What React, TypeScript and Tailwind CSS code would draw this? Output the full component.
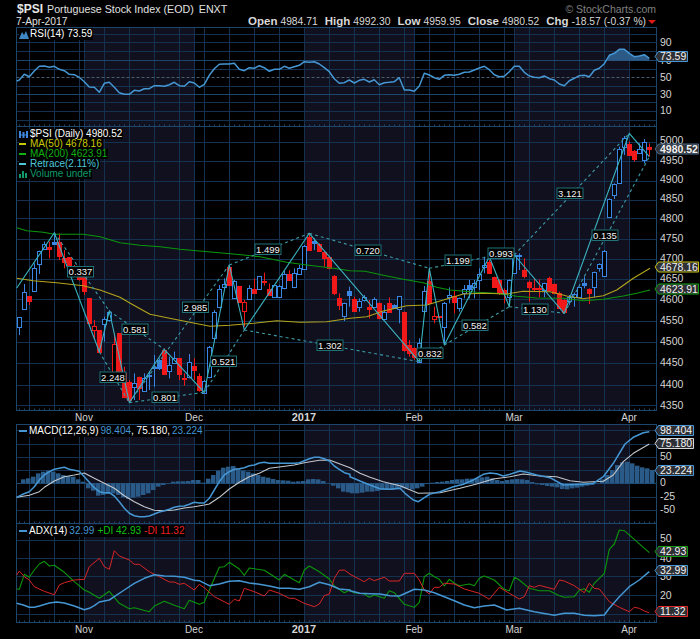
import type { ReactNode } from 'react';

// chart points were read off 3x crops, so they go through this to get page coords
const zp = (pts: number[], ox: number, oy: number) => {
  const out: string[] = [];
  for (let i = 0; i < pts.length; i += 2) {
    out.push(`${(pts[i] / 3 + ox).toFixed(1)},${(pts[i + 1] / 3 + oy).toFixed(1)}`);
  }
  return out.join(' ');
};

const LEFT = 16.5;
const RIGHT = 656.5;
const weekLines = Array.from({ length: 25 }, (_, i) => 29 + i * 25);
const monthLines = [84.5, 194.5, 304.5, 414.5, 514.5, 629.5];
const bands = [
  [84.5, 194.5],
  [304.5, 414.5],
  [514.5, 629.5],
];
const GRID = '#14324f';
const EDGE = '#1c466c';
const BLUE = '#4596d2';

function Grid({ top, bottom, hlines, strong = [] }: { top: number; bottom: number; hlines: number[]; strong?: number[] }) {
  const ticks = Array.from({ length: 128 }, (_, i) => 19.5 + i * 5);
  return (
    <g>
      {bands.map(([a, b]) => (
        <rect key={a} x={a} y={top} width={b - a} height={bottom - top} fill="#10101f" />
      ))}
      {weekLines.map((x) => (
        <line key={x} x1={x + 0.5} x2={x + 0.5} y1={top} y2={bottom} stroke={GRID} />
      ))}
      {monthLines.slice(0, 5).map((x) => (
        <line key={x} x1={x} x2={x} y1={top} y2={bottom} stroke={GRID} />
      ))}
      {hlines.map((y) => (
        <line key={y} x1={LEFT} x2={RIGHT} y1={y} y2={y} stroke={GRID} />
      ))}
      {strong.map((y) => (
        <line key={y} x1={LEFT} x2={RIGHT} y1={y} y2={y} stroke={EDGE} />
      ))}
      {ticks.map((x) => (
        <line key={x} x1={x} x2={x} y1={bottom - 2} y2={bottom} stroke={EDGE} />
      ))}
      <rect x={LEFT} y={top} width={RIGHT - LEFT} height={bottom - top} fill="none" stroke={EDGE} />
    </g>
  );
}

function Tag({ y, label, border, bold, w = 41 }: { y: number; label: string; border: string; bold?: boolean; w?: number }) {
  const x = 658;
  return (
    <g>
      <path
        d={`M${x - 3} ${y} L${x + 0.5} ${y - 5} H${x + w - 0.5} V${y + 5} H${x + 0.5} Z`}
        fill="#2e3036"
        stroke={border}
      />
      <text x={x + 2} y={y + 3.8} fontSize={10.5} fontWeight={bold ? 700 : 400} fill="#f2f2f2">
        {label}
      </text>
    </g>
  );
}

function AxisLabels({ items }: { items: [string, number][] }) {
  return (
    <g>
      {items.map(([t, y]) => (
        <text key={t} x={660} y={y + 3.5} fontSize={10.5} fill="#d4d4d4">
          {t}
        </text>
      ))}
    </g>
  );
}

function MonthLabels({ y }: { y: number }) {
  const items: [string, number, boolean][] = [
    ['Nov', 84, false],
    ['Dec', 194, false],
    ['2017', 304, true],
    ['Feb', 414, false],
    ['Mar', 514, false],
    ['Apr', 629, false],
  ];
  return (
    <g>
      {items.map(([t, x, b]) => (
        <text key={t} x={x} y={y} textAnchor="middle" fontSize={b ? 11 : 10} fontWeight={b ? 700 : 400} fill="#d4d4d4">
          {t}
        </text>
      ))}
    </g>
  );
}

function Panel({ top, height, className, legend, children }: { top: number; height: number; className: string; legend: ReactNode; children: ReactNode }) {
  return (
    <div className={`relative w-[700px] ${className}`}>
      <svg width={700} height={height} viewBox={`0 ${top} 700 ${height}`} className="block">
        {children}
      </svg>
      {legend}
    </div>
  );
}

function Poly({ points, color, width = 1.3 }: { points: string; color: string; width?: number }) {
  return <polyline points={points} fill="none" stroke={color} strokeWidth={width} strokeLinejoin="round" />;
}

/* ---------- RSI ---------- */
const rsiA = [50,243,58,240,73,223,88,230,103,213,118,199,133,198,148,202,163,199,178,208,193,212,208,223,223,224,238,232,253,245,268,261,283,262,298,277,313,250,328,247,343,262,358,278,373,283,388,283,403,271,418,273,433,266,448,266,463,257,478,257,493,259,508,254,523,247,538,257,553,259,568,245,583,249,598,262,613,253,628,226,643,206,658,193,673,192,688,192,703,190,718,208,733,212,748,203,763,205,778,197,793,203,808,214,823,208,838,208,853,199,868,205,883,200,898,196,913,185,928,187,943,185,958,192,973,203,988,215,1003,236,1018,250,1033,248,1048,240];
const rsiB = [13,249,28,241,43,238,58,246,73,239,88,254,103,248,118,247,133,245,148,233,163,270,178,270,193,274,208,258,223,220,238,225,253,233,268,238,283,226,298,224,313,226,328,223,343,217,358,216,373,210,388,204,403,199,418,209,433,224,448,230,463,229,478,215,493,199,508,199,523,217,538,228,553,232,568,233,583,228,598,236,613,240,628,252,643,257,658,242,673,235,688,227,703,226,718,230,733,211,748,205,763,191,778,166,793,160,808,148,823,148,838,160,853,170,868,168,883,164,898,175];
const rsiHot = [772,182,778,166,793,160,808,148,823,148,838,160,853,170,868,168,883,164,898,175,898,182];

function RsiChart() {
  return (
    <Panel
      top={27}
      height={100}
      className="h-[100px]"
      legend={
        <div className="absolute left-[19px] top-[1px] flex items-center gap-[1px] bg-black pr-[1px] text-[10px] leading-[12px] text-white">
          <svg width={10} height={9} viewBox="0 0 10 9">
            <path d="M0 9 L3 2 L5 5 L7 1 L10 9 Z" fill="#3f86c4" />
          </svg>
          <span>RSI(14) 73.59</span>
        </div>
      }
    >
      <Grid
        top={27.5}
        bottom={126.5}
        hlines={[34.5, 42.5, 51.5, 69.5, 86.5, 102.5, 111.5, 120.5]}
        strong={[60.5, 94.5]}
      />
      <line x1={LEFT} x2={RIGHT} y1={77.5} y2={77.5} stroke="#4a5c70" strokeDasharray="3 2" />
      <polygon points={zp(rsiHot, 350, 0)} fill="#2c5a86" />
      <Poly points={`${zp(rsiA, 0, 0)} ${zp(rsiB, 350, 0)}`} color={BLUE} width={1.5} />
      <AxisLabels items={[['90', 42], ['70', 60], ['50', 77], ['30', 94], ['10', 110]]} />
      <Tag y={56.5} label="73.59" border={BLUE} w={30} />
    </Panel>
  );
}

/* ---------- price ---------- */
// [bodyTop, bodyBottom, wickTop, wickBottom, kind], all in crop pixels
// kind: h hollow blue, r red, b solid blue, o hollow red
type Candle = [number, number, number, number, string];
const candlesA: Candle[] = [
  [322,352,322,375,'h'],[245,296,222,298,'h'],[258,272,258,285,'r'],[175,242,160,245,'h'],[122,163,122,192,'h'],[103,118,95,120,'h'],[112,116,95,145,'r'],[97,101,70,101,'b'],[97,137,70,150,'r'],[145,155,120,175,'r'],[142,168,142,195,'r'],[175,195,165,200,'r'],[197,208,190,212,'r'],[200,243,190,255,'r'],[265,340,265,345,'r'],[347,360,330,390,'o'],[360,425,360,428,'r'],[328,343,320,395,'h'],[305,330,300,335,'h'],[403,487,370,490,'o'],[370,490,370,495,'r'],[490,560,470,565,'r'],[515,570,510,575,'r'],[520,532,490,570,'h'],[500,535,500,570,'r'],[505,542,490,545,'h'],[496,499,485,540,'b'],[470,475,435,530,'h'],[450,475,445,480,'b'],[420,492,415,495,'r'],[466,482,440,505,'h'],[445,460,425,462,'h'],[445,492,445,510,'r'],[503,507,490,527,'r'],[455,500,432,505,'h'],[468,480,445,510,'r'],[498,540,490,545,'r'],[512,548,510,550,'h'],[412,500,408,505,'h'],[305,385,300,390,'h'],[238,292,225,295,'h'],[222,232,205,235,'h'],[170,225,165,228,'r'],[212,263,210,265,'h'],[228,275,228,278,'r'],[275,302,270,350,'o'],[235,268,225,270,'h'],[238,248,205,250,'r'],[199,238,199,240,'h'],[213,216,188,227,'r'],[238,255,220,258,'r'],[225,260,225,262,'h'],[227,260,225,262,'h'],[193,235,183,238,'h'],[192,210,180,212,'r'],[188,232,175,235,'h'],[175,193,165,195,'h'],[107,178,105,180,'h'],[80,120,70,122,'r'],[93,100,85,120,'b'],[103,122,100,125,'r'],[125,145,125,170,'r'],[140,175,138,178,'r'],[198,250,195,255,'r'],[265,285,250,300,'r'],[280,317,278,333,'h'],[243,255,230,290,'b'],
];
const candlesB: Candle[] = [
  [268,303,260,305,'r'],[272,290,265,305,'h'],[260,270,255,275,'h'],[292,296,270,325,'r'],[268,290,262,292,'h'],[280,325,278,328,'r'],[305,327,285,330,'h'],[280,305,262,307,'r'],[285,293,283,295,'b'],[258,298,258,340,'h'],[305,420,305,425,'r'],[405,430,390,440,'r'],[415,440,412,450,'r'],[400,455,385,457,'h'],[243,302,228,304,'h'],[213,278,175,280,'r'],[317,327,290,340,'o'],[318,322,318,322,'r'],[278,352,276,405,'h'],[255,260,232,280,'h'],[257,275,240,310,'r'],[265,295,263,305,'h'],[238,248,225,265,'h'],[225,237,210,265,'b'],[220,232,210,265,'h'],[193,210,175,240,'h'],[165,172,140,190,'h'],[155,188,150,190,'r'],[202,230,200,232,'r'],[210,250,208,255,'r'],[240,250,235,280,'r'],[210,260,208,290,'h'],[135,190,130,192,'h'],[135,138,130,180,'b'],[180,197,145,205,'r'],[215,232,212,275,'r'],[233,238,205,245,'r'],[233,238,208,262,'r'],[220,240,218,262,'h'],[205,240,200,245,'r'],[222,250,220,252,'r'],[250,295,245,297,'r'],[270,305,268,307,'r'],[262,272,255,285,'h'],[252,262,248,290,'h'],[232,260,230,262,'h'],[220,226,200,235,'b'],[237,248,235,282,'r'],[187,232,185,262,'h'],[163,175,160,185,'h'],[122,197,120,200,'h'],
];
// last few candles, y read from the crop that starts at page y 0
const candlesC: Candle[] = [
  [597,650,595,652,'h'],[553,585,550,597,'h'],[448,548,440,550,'h'],[415,440,408,465,'h'],[433,465,425,467,'r'],[452,477,450,485,'r'],[448,460,430,462,'h'],[427,480,417,490,'h'],[442,448,430,470,'r'],
];

function CandleMark({ x, c, oy }: { x: number; c: Candle; oy: number }) {
  const [t, b, wt, wb, kind] = c;
  const top = Math.round(t / 3 + oy) + 0.5;
  const bot = Math.round(b / 3 + oy) + 0.5;
  const color = kind === 'r' || kind === 'o' ? '#f01818' : '#3a86e4';
  const solid = kind === 'r' || kind === 'b';
  return (
    <g>
      <line x1={x} x2={x} y1={wt / 3 + oy} y2={wb / 3 + oy} stroke={color} />
      <rect
        x={x - 2}
        y={top}
        width={4}
        height={Math.max(bot - top, 1)}
        fill={solid ? color : '#000'}
        stroke={color}
        strokeWidth={1}
      />
    </g>
  );
}

const ma200A = [50,53,80,62,130,67,163,73,250,73,300,80,360,98,420,106,480,110,540,118,640,127,700,132,780,140,860,157,920,165,1000,175,1050,182];
const ma200B = [0,182,45,184,100,196,160,208,220,218,260,232,300,240,380,247,440,250,500,259,560,264,640,265,700,272,760,268,820,258,860,250,900,240];
const ma50A = [50,205,100,212,170,218,250,227,300,240,360,262,400,285,450,313,520,327,630,349,690,346,760,340,830,332,900,337,980,335,1050,325];
const ma50B = [0,325,50,320,100,303,170,287,230,285,290,267,340,252,400,250,470,252,520,244,600,245,650,258,700,266,760,257,800,240,850,205,900,175];

const zigzag = '16.7,288 54.3,232.7 99.3,351.7 109.3,311 129.3,402.7 164.3,349.3 204.3,392.3 229.3,265 244.3,330 309.3,233.3 419.3,361.7 429.3,268.3 444.3,345 489.3,256.7 509.3,306.7 514.3,255 564.3,313.3 629.3,133.3 649.3,156.7';
const dashed = [
  [54.3,232.7,109.3,311],[109.3,311,164.3,349.3],[99.3,351.7,129.3,402.7],[129.3,402.7,204.3,392.3],[129.3,402.7,229.3,265],[204.3,392.3,244.3,330],[229.3,265,309.3,233.3],[244.3,330,419.3,361.7],[309.3,233.3,429.3,268.3],[419.3,361.7,444.3,345],[429.3,268.3,489.3,256.7],[444.3,345,509.3,306.7],[489.3,256.7,514.3,255],[509.3,306.7,564.3,313.3],[514.3,255,629.3,133.3],[564.3,313.3,649.3,156.7],
];
const ratios: [string, number, number][] = [
  ['0.337',80.5,271.5],['0.581',135,329],['2.985',195.5,307],['1.499',268,249],['2.248',113,377],['0.801',165,397],['0.521',223.5,361],['1.302',330,345],['0.720',368,250],['1.199',458,260],['0.993',501,253],['0.832',430,353],['0.582',475,325],['1.130',535,309],['0.135',605,235],['3.121',570,193],
];

function LegendRow({ mark, color, children }: { mark: ReactNode; color: string; children: ReactNode }) {
  return (
    <div className={`flex h-[10px] items-center gap-[1px] bg-black pr-[1px] ${color}`}>
      <span className="flex w-[10px] items-center">{mark}</span>
      <span>{children}</span>
    </div>
  );
}

function PriceChart() {
  return (
    <Panel
      top={127}
      height={297}
      className="h-[297px]"
      legend={
        <div className="absolute left-[19px] top-[2px] flex w-fit flex-col items-start text-[10px] leading-[10px]">
          <LegendRow
            color="text-white"
            mark={
              <svg width={9} height={9} viewBox="0 0 9 9">
                <path d="M1 1v7M4.5 2v6M8 1v7" stroke="#3f86e0" strokeWidth={2} />
                <path d="M0 5h9" stroke="#3f86e0" />
              </svg>
            }
          >
            $PSI (Daily) 4980.52
          </LegendRow>
          <LegendRow color="text-[#c8c800]" mark={<span className="h-[2px] w-[7px] bg-[#c8c800]" />}>MA(50) 4678.16</LegendRow>
          <LegendRow color="text-[#10b010]" mark={<span className="h-[2px] w-[7px] bg-[#10b010]" />}>MA(200) 4623.91</LegendRow>
          <LegendRow color="text-[#4cc8d8]" mark={<span className="h-[2px] w-[7px] bg-[#4cc8d8]" />}>Retrace(2.11%)</LegendRow>
          <LegendRow
            color="text-[#0f9a6a]"
            mark={
              <svg width={9} height={8} viewBox="0 0 9 8">
                <path d="M0 8V4h2V8ZM3 8V1h2V8ZM6 8V3h2V8Z" fill="#0f9a6a" />
              </svg>
            }
          >
            Volume undef
          </LegendRow>
        </div>
      }
    >
      <Grid
        top={126.5}
        bottom={410.5}
        hlines={[142.5, 161.5, 181.5, 200.5, 218.5, 239.5, 259.5, 279.5, 299.5, 321.5, 342.5, 363.5, 385.5, 405.5]}
      />
      {candlesA.map((c, i) => <CandleMark key={i} x={19.5 + i * 5} c={c} oy={210} />)}
      {candlesB.map((c, i) => <CandleMark key={i} x={354.5 + i * 5} c={c} oy={210} />)}
      {candlesC.map((c, i) => <CandleMark key={i} x={609.5 + i * 5} c={c} oy={0} />)}
      <Poly points={`${zp(ma200A, 0, 210)} ${zp(ma200B, 350, 210)}`} color="#0c960c" width={1.1} />
      <Poly points={`${zp(ma50A, 0, 210)} ${zp(ma50B, 350, 210)}`} color="#b4a41c" width={1.1} />
      <Poly points={zigzag} color="#3cb4c0" width={1.1} />
      {dashed.map(([x1, y1, x2, y2]) => (
        <line key={`${x1}-${x2}-${y2}`} x1={x1} y1={y1} x2={x2} y2={y2} stroke="#3c9aa4" strokeWidth={1.1} strokeDasharray="3 3" />
      ))}
      {ratios.map(([t, x, y]) => (
        <g key={t}>
          <rect x={x - 13} y={y - 5} width={26} height={10.5} fill="#000" stroke="#1f7276" />
          <text x={x} y={y + 3.5} textAnchor="middle" fontSize={9.5} fill="#f4f4f4">{t}</text>
        </g>
      ))}
      <AxisLabels
        items={[['5000', 140], ['4950', 160], ['4900', 179], ['4850', 198], ['4800', 218], ['4750', 238], ['4700', 258], ['4650', 278], ['4600', 299], ['4550', 320], ['4500', 341], ['4450', 362], ['4400', 384], ['4350', 405]]}
      />
      <Tag y={149} label="4980.52" border="#4c6a88" bold />
      <Tag y={267} label="4678.16" border="#c8c010" />
      <Tag y={289} label="4623.91" border="#12a012" />
      <MonthLabels y={421} />
    </Panel>
  );
}

/* ---------- MACD ---------- */
const macdBlueA = [50,232,70,222,88,215,103,200,118,180,133,165,148,155,163,148,193,142,208,148,223,151,238,154,253,170,268,187,283,203,298,215,313,218,328,218,343,228,358,245,373,265,388,280,403,287,418,290,433,290,448,288,463,282,478,276,493,272,508,268,523,262,538,259,553,258,568,253,583,247,598,249,613,249,628,235,643,210,658,185,673,165,688,155,703,148,718,146,733,143,748,137,763,135,778,129,793,127,808,130,853,130,883,130,898,128,913,122,928,116,943,112,958,112,973,116,988,123,1003,138,1018,148,1033,158,1050,163];
const macdWhiteA = [50,232,88,226,118,215,133,202,163,183,193,170,223,165,253,159,283,175,313,190,343,205,373,227,403,245,433,260,463,271,493,272,523,270,553,264,583,260,613,255,628,252,658,232,688,207,718,187,748,170,778,160,808,145,838,141,883,135,913,128,958,121,988,120,1020,132,1050,143];
const macdBlueB = [0,170,30,183,60,195,90,206,120,208,150,205,165,220,190,240,205,245,220,235,240,222,270,215,310,200,340,193,370,180,400,163,420,159,440,161,460,168,480,163,510,153,530,157,560,165,600,173,640,195,700,193,730,190,760,170,790,130,825,72,850,52,880,38,898,35];
const macdWhiteB = [0,143,30,160,60,172,100,185,150,197,205,220,270,218,330,205,380,192,430,177,480,170,520,162,570,168,620,170,660,182,700,187,760,184,790,165,820,125,850,100,898,72];
const histA = [178,175,170,160,155,152,155,160,165,168,170,178,185,205,212,227,225,222,220,225,232,237,233,230,225,220,210,200,195,190,185,184,184,183,180,180,188,176,165,152,143,140,138,145,152,155,160,165,170,173,177,180,181,182,185,184,183,178,177,178,183,190,197,205,215,217];
const histB = [220,220,218,215,215,213,210,210,210,208,205,205,208,205,200,192,188,186,185,183,180,178,178,176,176,175,172,170,175,180,183,180,178,177,178,180,186,193,195,198,200,202,207,208,205,203,200,197,195,190,178,165,150,135,127,125,130,137,142,145,150];

function MacdChart() {
  return (
    <Panel
      top={424}
      height={99}
      className="h-[99px]"
      legend={
        <div className="absolute left-[19px] top-[1px] flex items-center gap-[2px] bg-black pr-[1px] text-[10px] leading-[12px]">
          <span className="h-[2px] w-[8px] bg-[#4596d2]" />
          <span className="text-white">MACD(12,26,9)</span>
          <span className="text-[#4596d2]">98.404</span>
          <span className="-ml-[2px] text-white">, 75.180,</span>
          <span className="text-[#4596d2]">23.224</span>
        </div>
      }
    >
      <Grid top={424.5} bottom={523.5} hlines={[430.5, 444.5, 457.5, 470.5, 497.5, 510.5]} strong={[483.5]} />
      {histA.map((v, i) => {
        const y = v / 3 + 420;
        return <rect key={i} x={21 + i * 5} y={Math.min(y, 483.3)} width={4.5} height={Math.abs(y - 483.3)} fill="#2a5a88" />;
      })}
      {histB.map((v, i) => {
        const y = v / 3 + 420;
        return <rect key={i} x={350 + i * 5} y={Math.min(y, 483.3)} width={4.5} height={Math.abs(y - 483.3)} fill="#2a5a88" />;
      })}
      <Poly points={`${zp(macdWhiteA, 0, 420)} ${zp(macdWhiteB, 350, 420)}`} color="#c4c8cc" width={1.1} />
      <Poly points={`${zp(macdBlueA, 0, 420)} ${zp(macdBlueB, 350, 420)}`} color={BLUE} width={1.5} />
      <AxisLabels items={[['50', 456.5], ['0', 482.5], ['-25', 496.5], ['-50', 509.5]]} />
      <Tag y={430.5} label="98.404" border={BLUE} w={36} />
      <Tag y={443.5} label="75.180" border="#d8d8d8" w={36} />
      <Tag y={470.5} label="23.224" border={BLUE} w={36} />
    </Panel>
  );
}

/* ---------- ADX ---------- */
const adxBlueA = [50,550,70,555,88,562,103,562,118,558,148,549,170,546,193,549,223,558,253,569,268,565,283,557,298,546,328,540,343,530,373,510,403,490,433,475,463,464,493,468,523,469,553,472,583,481,598,482,628,497,658,492,688,484,718,482,748,489,778,493,808,498,838,505,868,505,898,508,928,500,958,487,988,494,1018,507,1050,510];
const adxGreenA = [50,507,58,508,73,463,88,472,103,450,118,432,133,424,148,438,163,436,193,457,223,485,253,510,268,517,298,535,328,514,358,550,388,566,403,563,448,575,463,558,493,544,523,556,553,566,568,541,598,553,613,547,628,510,658,442,673,440,688,427,718,447,733,466,748,444,793,451,823,470,838,480,853,463,883,480,898,488,913,450,928,438,958,455,988,477,1003,498,1033,518,1050,510];
const adxRedA = [50,465,58,453,73,470,88,480,103,500,133,514,163,524,178,495,193,488,223,480,253,478,268,440,298,415,313,440,328,448,343,392,358,408,388,420,403,433,418,433,448,455,478,470,508,486,523,486,538,493,553,490,583,510,598,493,613,503,643,530,688,553,703,538,718,543,733,505,763,515,793,528,808,510,838,520,868,535,883,535,913,550,943,560,958,552,973,527,988,522,1003,475,1018,451,1033,450,1050,462];
const adxBlueB = [0,512,30,520,60,521,90,522,120,527,148,528,170,518,193,508,223,510,253,518,283,530,313,542,343,555,373,563,403,558,433,555,470,570,508,565,553,575,613,586,643,580,673,580,703,586,733,587,763,585,778,565,808,530,838,500,868,480,898,455];
const adxGreenB = [0,512,13,518,43,522,58,532,73,525,103,535,118,512,133,518,163,553,193,562,208,547,223,470,238,460,253,470,268,478,283,498,298,478,313,490,328,497,358,492,373,497,388,475,403,468,433,480,463,508,478,512,493,472,508,480,538,505,568,512,598,512,628,527,643,532,673,530,688,510,703,506,718,517,733,490,763,460,778,388,793,372,808,330,823,332,853,358,898,398];
const adxRedB = [0,463,43,485,58,475,73,482,103,472,118,483,148,483,163,460,193,460,208,480,223,510,238,522,253,502,268,502,283,490,313,492,343,507,388,520,418,538,448,502,478,520,508,537,523,530,538,497,553,502,568,496,613,508,628,480,643,483,673,497,703,518,718,490,733,505,748,507,778,545,808,562,838,575,853,562,868,565,883,573,898,578];

function AdxChart() {
  return (
    <Panel
      top={523}
      height={116}
      className="h-[116px]"
      legend={
        <div className="absolute left-[19px] top-[2px] flex items-center gap-[2px] bg-black pr-[1px] text-[10px] leading-[12px]">
          <span className="h-[2px] w-[8px] bg-[#4596d2]" />
          <span className="text-white">ADX(14)</span>
          <span className="text-[#4596d2]">32.99</span>
          <span className="ml-[1px] text-[#10c010]">+DI 42.93</span>
          <span className="ml-[1px] text-[#f02020]">-DI 11.32</span>
        </div>
      }
    >
      <Grid top={523.5} bottom={622.5} hlines={[540.5, 558.5, 576.5, 595.5, 614.5]} />
      <Poly points={`${zp(adxGreenA, 0, 420)} ${zp(adxGreenB, 350, 420)}`} color="#0c960c" width={1.1} />
      <Poly points={`${zp(adxRedA, 0, 420)} ${zp(adxRedB, 350, 420)}`} color="#d82626" width={1} />
      <Poly points={`${zp(adxBlueA, 0, 420)} ${zp(adxBlueB, 350, 420)}`} color={BLUE} width={1.5} />
      <AxisLabels items={[['50', 538], ['40', 558], ['30', 576], ['20', 595]]} />
      <Tag y={551.5} label="42.93" border="#12a012" w={30} />
      <Tag y={570.5} label="32.99" border={BLUE} w={30} />
      <Tag y={611.5} label="11.32" border="#e02828" w={30} />
      <MonthLabels y={633} />
    </Panel>
  );
}

function Stat({ name, value }: { name: string; value: string }) {
  return (
    <span className="flex items-baseline gap-[3px]">
      <b className="text-[11.5px] font-bold text-[#d8d8d8]">{name}</b>
      <span className="text-[10.3px] text-[#d8d8d8]">{value}</span>
    </span>
  );
}

export default function App() {
  return (
    <div className="h-[639px] w-[700px] overflow-hidden bg-black font-['Liberation_Sans',sans-serif] text-white">
      <div className="flex h-[16px] items-end justify-between pl-[17px] pr-[44px]">
        <div className="flex items-baseline gap-[4px] text-[10.7px] leading-[14px]">
          <b className="text-[12px] font-bold text-[#e8e8e8]">$PSI</b>
          <span className="text-[#e0e0e0]">Portuguese Stock Index (EOD)</span>
          <span className="ml-[1px] text-[#e0e0e0]">ENXT</span>
        </div>
        <span className="text-[10.5px] leading-[14px] text-[#808080]">© StockCharts.com</span>
      </div>
      <div className="flex h-[11px] items-center justify-between pl-[16px] pr-[44px]">
        <span className="text-[10.3px] leading-[12px] text-[#e0e0e0]">7-Apr-2017</span>
        <div className="flex items-center gap-[7px] leading-[12px]">
          <Stat name="Open" value="4984.71" />
          <Stat name="High" value="4992.30" />
          <Stat name="Low" value="4959.95" />
          <Stat name="Close" value="4980.52" />
          <Stat name="Chg" value="-18.57 (-0.37 %)" />
          <span className="-ml-[5px] h-0 w-0 border-x-[4px] border-t-[4px] border-x-transparent border-t-[#e01818]" />
        </div>
      </div>
      <RsiChart />
      <PriceChart />
      <MacdChart />
      <AdxChart />
    </div>
  );
}
